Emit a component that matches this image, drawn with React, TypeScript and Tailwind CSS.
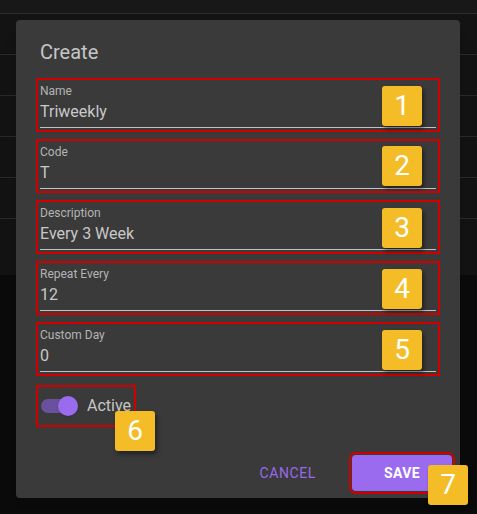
import React from 'react'

const fields = [
  { label: 'Name', value: 'Triweekly' },
  { label: 'Code', value: 'T' },
  { label: 'Description', value: 'Every 3 Week' },
  { label: 'Repeat Every', value: '12' },
  { label: 'Custom Day', value: '0' },
]

// annotation markers laid over the screenshot
const badges = [
  { n: 1, x: 382, y: 86 },
  { n: 2, x: 382, y: 146 },
  { n: 3, x: 382, y: 208 },
  { n: 4, x: 382, y: 269 },
  { n: 5, x: 382, y: 330 },
  { n: 6, x: 115, y: 411 },
  { n: 7, x: 428, y: 465 },
]

function Field({ label, value }: { label: string; value: string }) {
  return (
    <div className="flex h-[46px] flex-col border-b border-[#c2c2c2] outline-2 outline-offset-2 outline-[#d00000]">
      <span className="mt-[2px] text-[12px] leading-[14px] text-[#b4b4b4]">{label}</span>
      <span className="mt-[4px] text-[16px] leading-[20px] text-[#c8c8c8]">{value}</span>
    </div>
  )
}

export default function App() {
  return (
    <div
      className="relative h-[514px] w-full overflow-hidden bg-[#0b0b0b]"
      style={{ fontFamily: 'Roboto, "Liberation Sans", sans-serif' }}
    >
      {/* page behind the backdrop */}
      <div className="flex flex-col">
        <div className="h-[14px] border-b border-[#2c2c2c] bg-[#181818]" />
        {[0, 1, 2, 3, 4].map((i) => (
          <div key={i} className="h-[41px] border-b border-[#2a2a2a] bg-[#131313]" />
        ))}
        <div className="h-[56px] bg-[#131313]" />
      </div>

      {/* dialog */}
      <div className="absolute left-[16px] top-[20px] flex h-[478px] w-[444px] flex-col rounded-[4px] bg-[#3a3a3a] shadow-xl">
        <h2 className="px-6 pt-4 text-[20px] leading-[32px] text-[#c6c6c6]">Create</h2>
        <div className="mt-[14px] flex flex-col gap-[15px] px-6">
          {fields.map((f) => (
            <Field key={f.label} label={f.label} value={f.value} />
          ))}
        </div>
        <div className="mx-6 mt-[17px] flex h-[34px] w-[92px] items-center outline-2 outline-offset-2 outline-[#d00000]">
          <div className="relative ml-[1px] h-[20px] w-[37px]">
            <div className="absolute left-0 top-[3px] h-[14px] w-[34px] rounded-full bg-[#6a519e]" />
            <div className="absolute left-[17px] top-0 h-[20px] w-[20px] rounded-full bg-[#9b6bef] shadow" />
          </div>
          <span className="ml-[9px] text-[16px] text-[#c6c6c6]">Active</span>
        </div>
        <div className="mt-auto flex items-center justify-end gap-[36px] p-2 pb-[7px]">
          <button className="text-[14px] font-normal uppercase tracking-[0.6px] text-[#9a68ea]">Cancel</button>
          <button className="h-[36px] w-[100px] rounded-[4px] bg-[#9b6bef] text-[14px] font-bold uppercase tracking-[0.4px] text-white outline-2 outline-offset-1 outline-[#d00000]">
            Save
          </button>
        </div>
      </div>

      {badges.map((b) => (
        <div
          key={b.n}
          className="absolute flex h-[40px] w-[40px] items-center justify-center rounded-[3px] bg-[#f4bd28] text-[28px] leading-none text-white shadow-[2px_3px_4px_rgba(0,0,0,0.45)]"
          style={{ left: b.x, top: b.y }}
        >
          {b.n}
        </div>
      ))}
    </div>
  )
}
